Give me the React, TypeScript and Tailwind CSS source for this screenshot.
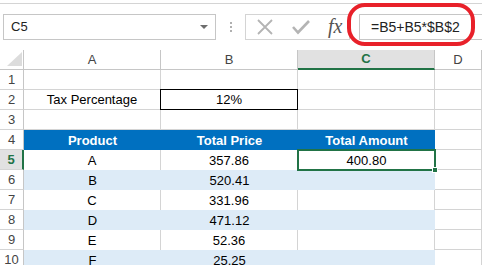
import React from 'react';

const cols = ['A', 'B', 'C', 'D'];

const data = [
  { p: 'A', price: '357.86' },
  { p: 'B', price: '520.41' },
  { p: 'C', price: '331.96' },
  { p: 'D', price: '471.12' },
  { p: 'E', price: '52.36' },
  { p: 'F', price: '25.25' },
];

const RowHead: React.FC<{ n: number; active?: boolean }> = ({ n, active }) => (
  <div
    className={
      active
        ? 'h-[20px] flex items-end justify-center pb-[1px] bg-[#e1e1e1] border-b border-[#d4d4d4] border-r-2 border-r-[#217346] text-[#217346] font-bold text-[13px] leading-[16px]'
        : 'h-[20px] flex items-end justify-center pb-[1px] bg-white border-b border-[#d4d4d4] border-r border-r-[#c6c6c6] text-[#444] text-[13px] leading-[16px]'
    }
  >
    {n}
  </div>
);

const Cell: React.FC<{ children?: React.ReactNode; className?: string }> = ({ children, className }) => (
  <div
    className={
      'h-[20px] flex items-end justify-center pb-[1px] text-[13px] leading-[16px] text-black ' +
      (className ?? 'border-r border-b border-[#d4d4d4]')
    }
  >
    {children}
  </div>
);

export default function App() {
  return (
    <div className="relative w-[482px] h-[265px] overflow-hidden bg-white font-['Liberation_Sans',Arial,sans-serif]">
      {/* ribbon edge */}
      <div className="h-[4px] border-b border-[#d4d4d4]" />
      <div className="h-[10px]" />

      {/* formula bar */}
      <div className="flex h-[26px]">
        <div className="ml-[3px] w-[213px] border border-[#c6c6c6] flex items-center justify-between pl-[7px] pr-[7px]">
          <span className="text-[13px] text-[#222]">C5</span>
          <span className="w-0 h-0 border-l-[4px] border-r-[4px] border-t-[4px] border-l-transparent border-r-transparent border-t-[#6d6d6d]" />
        </div>
        <div className="w-[29px] flex flex-col items-center justify-center gap-[2px]">
          <span className="w-[2px] h-[2px] bg-[#b0b0b0]" />
          <span className="w-[2px] h-[2px] bg-[#b0b0b0]" />
          <span className="w-[2px] h-[2px] bg-[#b0b0b0]" />
        </div>
        <div className="w-[105px] border border-[#d4d4d4] flex items-center pl-[10px] gap-[17px]">
          <svg width="18" height="16" viewBox="0 0 18 16">
            <path d="M2 1 L16 15 M16 1 L2 15" stroke="#b4b4b4" strokeWidth="1.8" fill="none" />
          </svg>
          <svg width="20" height="16" viewBox="0 0 20 16">
            <path d="M2 8 L7 13.5 L18 2" stroke="#b4b4b4" strokeWidth="2.6" fill="none" />
          </svg>
          <span className="font-['Liberation_Serif',serif] italic text-[20px] leading-none text-[#555] -mt-[2px]">fx</span>
        </div>
        <div className="w-[9px]" />
        <div className="flex-1 border border-[#c6c6c6] border-r-0 flex items-center pl-[11px]">
          <span className="text-[14px] text-[#222]">=B5+B5*$B$2</span>
        </div>
      </div>
      <div className="h-[10px]" />

      {/* sheet */}
      <div className="grid grid-cols-[24px_137px_137px_137px_1fr]">
        {/* column headers */}
        <div className="h-[20px] border-r border-b border-[#c6c6c6] flex items-end justify-end pr-[1px] pb-[3px]">
          <svg width="15" height="14" viewBox="0 0 15 14">
            <path d="M15 0 L15 14 L0 14 Z" fill="#dcdcdc" />
          </svg>
        </div>
        {cols.map((c) =>
          c === 'C' ? (
            <div
              key={c}
              className="h-[20px] flex items-end justify-center pb-[1px] bg-[#e1e1e1] border-r border-r-[#c6c6c6] border-b-2 border-b-[#217346] text-[#217346] font-bold text-[13px] leading-[16px]"
            >
              {c}
            </div>
          ) : (
            <div
              key={c}
              className="h-[20px] flex items-end justify-center pb-[1px] border-r border-b border-[#c6c6c6] text-[#444] text-[13px] leading-[16px]"
            >
              {c}
            </div>
          )
        )}

        {/* row 1 */}
        <RowHead n={1} />
        <Cell />
        <Cell />
        <Cell />
        <Cell />

        {/* row 2 */}
        <RowHead n={2} />
        <Cell>Tax Percentage</Cell>
        <Cell className="border border-black -ml-[1px] -mt-[1px] h-[21px]">12%</Cell>
        <Cell />
        <Cell />

        {/* row 3 */}
        <RowHead n={3} />
        <Cell />
        <Cell />
        <Cell />
        <Cell />

        {/* row 4 table header */}
        <RowHead n={4} />
        <Cell className="bg-[#0070c0] font-bold">
          <span className="text-white">Product</span>
        </Cell>
        <Cell className="bg-[#0070c0] font-bold">
          <span className="text-white">Total Price</span>
        </Cell>
        <Cell className="bg-[#0070c0] font-bold">
          <span className="text-white">Total Amount</span>
        </Cell>
        <Cell />

        {data.map((r, i) => {
          const n = i + 5;
          const band = i % 2 === 1;
          const cls = band
            ? 'bg-[#ddebf7]'
            : 'bg-white border-r border-[#d4d4d4]';
          return (
            <React.Fragment key={n}>
              <RowHead n={n} active={n === 5} />
              <Cell className={cls}>{r.p}</Cell>
              <Cell className={cls}>{r.price}</Cell>
              {n === 5 ? (
                <div className="relative h-[20px] flex items-end justify-center pb-[1px] text-[13px] leading-[16px]">
                  400.80
                  <div className="absolute -left-[1px] -top-[1px] -right-[1px] -bottom-[1px] border-2 border-[#217346]" />
                  <div className="absolute -right-[3px] -bottom-[3px] w-[6px] h-[6px] bg-[#217346] border border-white" />
                </div>
              ) : (
                <Cell className={cls} />
              )}
              <Cell />
            </React.Fragment>
          );
        })}
      </div>

      {/* red annotation */}
      <div className="absolute left-[347px] top-[3px] w-[128px] h-[43px] border-[4px] border-[#e8212a] rounded-[18px]" />
    </div>
  );
}
